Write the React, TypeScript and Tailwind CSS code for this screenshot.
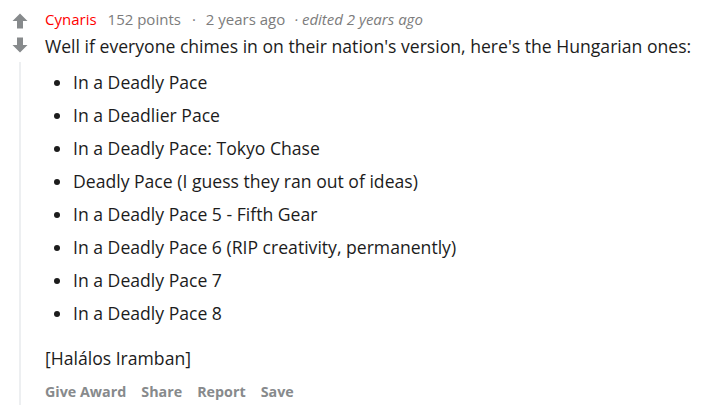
import React from "react";

const items = [
  "In a Deadly Pace",
  "In a Deadlier Pace",
  "In a Deadly Pace: Tokyo Chase",
  "Deadly Pace (I guess they ran out of ideas)",
  "In a Deadly Pace 5 - Fifth Gear",
  "In a Deadly Pace 6 (RIP creativity, permanently)",
  "In a Deadly Pace 7",
  "In a Deadly Pace 8",
];

function Arrow({ down }: { down?: boolean }) {
  return (
    <svg width="16" height="16" viewBox="0 0 16 16" className={down ? "rotate-180" : ""}>
      <path d="M8 0.5 L15.5 8 L11 8 L11 15.5 L5 15.5 L5 8 L0.5 8 Z" fill="#878a8c" />
    </svg>
  );
}

export default function App() {
  return (
    <div className="w-[704px] h-[405px] bg-white overflow-hidden flex" style={{ fontFamily: '"Open Sans", sans-serif' }}>
      <div className="w-[45px] flex flex-col items-center pt-[13px] shrink-0">
        <div className="flex flex-col items-center gap-[8px] mr-[5px]">
          <Arrow />
          <Arrow down />
        </div>
        <div className="w-[2px] flex-1 bg-[#edeff1] mt-[9px] mr-[5px]" />
      </div>
      <div className="flex-1 pt-[9px]">
        <div className="flex items-center text-[15px] leading-[20px] text-[#7c7c7c]">
          <span className="text-[#ff0000]">Cynaris</span>
          <span className="ml-[11px]">152 points</span>
          <span className="ml-[11px]">·</span>
          <span className="ml-[10px]">2 years ago</span>
          <span className="italic ml-[9px]">· edited 2 years ago</span>
        </div>
        <p className="text-[17.6px] leading-[24px] text-[#1c1c1c] mt-[5px]">
          Well if everyone chimes in on their nation's version, here's the Hungarian ones:
        </p>
        <ul className="mt-[8px] pl-[28px] list-disc text-[17.6px] leading-[33px] text-[#1c1c1c]">
          {items.map((t) => (
            <li key={t}>{t}</li>
          ))}
        </ul>
        <p className="text-[17.6px] leading-[24px] text-[#1c1c1c] mt-[16px]">[Halálos Iramban]</p>
        <div className="flex gap-[15px] text-[14.3px] font-bold text-[#878a8c] mt-[12px] leading-[20px]">
          <span>Give Award</span>
          <span>Share</span>
          <span>Report</span>
          <span>Save</span>
        </div>
      </div>
    </div>
  );
}
